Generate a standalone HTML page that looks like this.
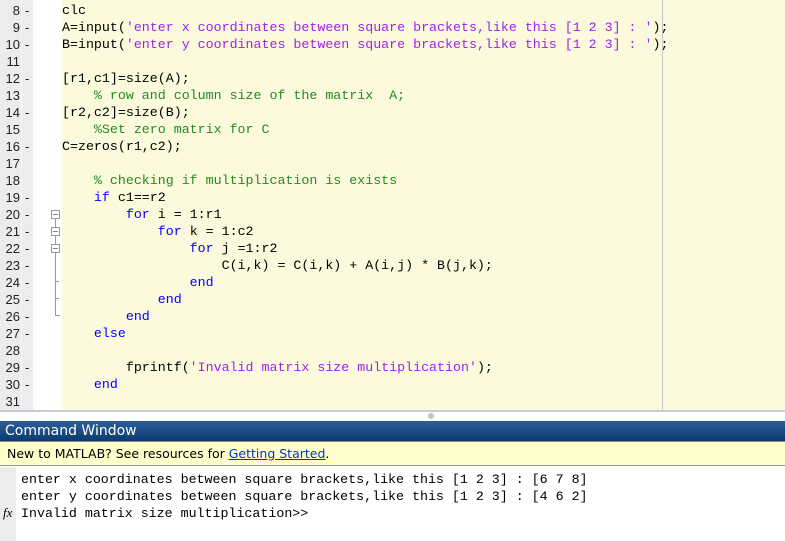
<!DOCTYPE html>
<html><head><style>
body{margin:0;width:785px;height:541px;overflow:hidden;background:#fff;position:relative;font-family:"Liberation Mono",monospace;}
.ed{position:absolute;left:0;top:0;width:785px;height:410px;background:#fcfadc;}
.g1{position:absolute;left:0;top:0;width:21px;height:410px;background:#ececec;}
.g2{position:absolute;left:22px;top:0;width:11px;height:410px;background:#ececec;}
.g3{position:absolute;left:33px;top:0;width:29px;height:410px;background:#fff;}
.vl{position:absolute;left:662px;top:0;width:1px;height:410px;background:#c8c8c8;}
.ln{position:absolute;font-size:13px;font-family:"Liberation Sans",sans-serif;color:#222;}
.n{position:absolute;width:20px;text-align:right;left:0;}
.d{position:absolute;left:25px;}
.code{position:absolute;left:62px;font-size:13.3px;white-space:pre;color:#000;}
.k{color:#0000ff}.s{color:#a020f0}.c{color:#228b22}
.fold{position:absolute;width:7px;height:7px;border:1px solid #999;background:#fff;left:51px;}
.fold:after{content:"";position:absolute;left:1px;top:3px;width:5px;height:1px;background:#888;}
.hdr{position:absolute;left:0;top:421px;width:785px;height:20px;background:linear-gradient(#2c5f98,#0d3a6e);color:#fff;font-family:"DejaVu Sans",sans-serif;font-size:14px;line-height:20px;padding-left:5px;box-sizing:border-box;}
.ban{position:absolute;left:0;top:441px;width:785px;height:25px;background:#ffffcc;border-bottom:1px solid #999;border-top:1px solid #888;box-sizing:border-box;font-family:"DejaVu Sans",sans-serif;font-size:12.5px;line-height:24px;padding-left:7px;}
.ban a{color:#0033cc;text-decoration:underline;}
.cg{position:absolute;left:0;top:467px;width:16px;height:74px;background:#ececec;}
.cmd{position:absolute;left:21px;font-size:13.3px;white-space:pre;}
</style></head><body>
<div class="ed"></div><div class="g1"></div><div class="g2"></div><div class="g3"></div><div class="vl"></div>
<div style="position:absolute;left:0;top:410px;width:785px;height:2px;background:#c8cbd2"></div>
<div style="position:absolute;left:0;top:412px;width:785px;height:9px;background:#fff"></div>
<div style="position:absolute;left:428px;top:413px;width:6px;height:6px;border-radius:50%;background:#c4c4c4"></div>
<div id="nums"></div>
<div style="position:absolute;left:55px;top:219px;width:1px;height:96px;background:#999"></div>
<div style="position:absolute;left:55px;top:315px;width:5px;height:1px;background:#999"></div>
<div style="position:absolute;left:55px;top:281px;width:4px;height:1px;background:#999"></div>
<div style="position:absolute;left:55px;top:298px;width:4px;height:1px;background:#999"></div>
<div class="fold" style="top:210px"></div><div class="fold" style="top:227px"></div><div class="fold" style="top:244px"></div>
<div class="hdr">Command Window</div>
<div class="ban">New to MATLAB? See resources for <a>Getting Started</a>.</div>
<div class="cg"></div>
<div class="cmd" style="top:472px">enter x coordinates between square brackets,like this [1 2 3] : [6 7 8]</div>
<div class="cmd" style="top:489px">enter y coordinates between square brackets,like this [1 2 3] : [4 6 2]</div>
<div class="cmd" style="top:506px">Invalid matrix size multiplication&gt;&gt;</div>
<div style="position:absolute;left:3px;top:505px;font-family:'Liberation Serif',serif;font-style:italic;font-size:13px">fx</div>
<script>
var lines=[
[8,1,'clc'],
[9,1,"A=input(<span class=s>'enter x coordinates between square brackets,like this [1 2 3] : '</span>);"],
[10,1,"B=input(<span class=s>'enter y coordinates between square brackets,like this [1 2 3] : '</span>);"],
[11,0,''],
[12,1,'[r1,c1]=size(A);'],
[13,0,'    <span class=c>% row and column size of the matrix  A;</span>'],
[14,1,'[r2,c2]=size(B);'],
[15,0,'    <span class=c>%Set zero matrix for C</span>'],
[16,1,'C=zeros(r1,c2);'],
[17,0,''],
[18,0,'    <span class=c>% checking if multiplication is exists</span>'],
[19,1,'    <span class=k>if</span> c1==r2'],
[20,1,'        <span class=k>for</span> i = 1:r1'],
[21,1,'            <span class=k>for</span> k = 1:c2'],
[22,1,'                <span class=k>for</span> j =1:r2'],
[23,1,'                    C(i,k) = C(i,k) + A(i,j) * B(j,k);'],
[24,1,'                <span class=k>end</span>'],
[25,1,'            <span class=k>end</span>'],
[26,1,'        <span class=k>end</span>'],
[27,1,'    <span class=k>else</span>'],
[28,0,''],
[29,1,'        fprintf(<span class=s>\'Invalid matrix size multiplication\'</span>);'],
[30,1,'    <span class=k>end</span>'],
[31,0,'']];
var h='';
lines.forEach(function(l,i){var t=2+i*17;
h+='<div class="ln" style="top:'+(t+1)+'px;left:0"><span class="n">'+l[0]+'</span>'+(l[1]?'<span class="d">-</span>':'')+'</div>';
h+='<div class="code" style="top:'+(t+1)+'px">'+l[2]+'</div>';});
document.getElementById('nums').innerHTML=h;
</script>
</body></html>
